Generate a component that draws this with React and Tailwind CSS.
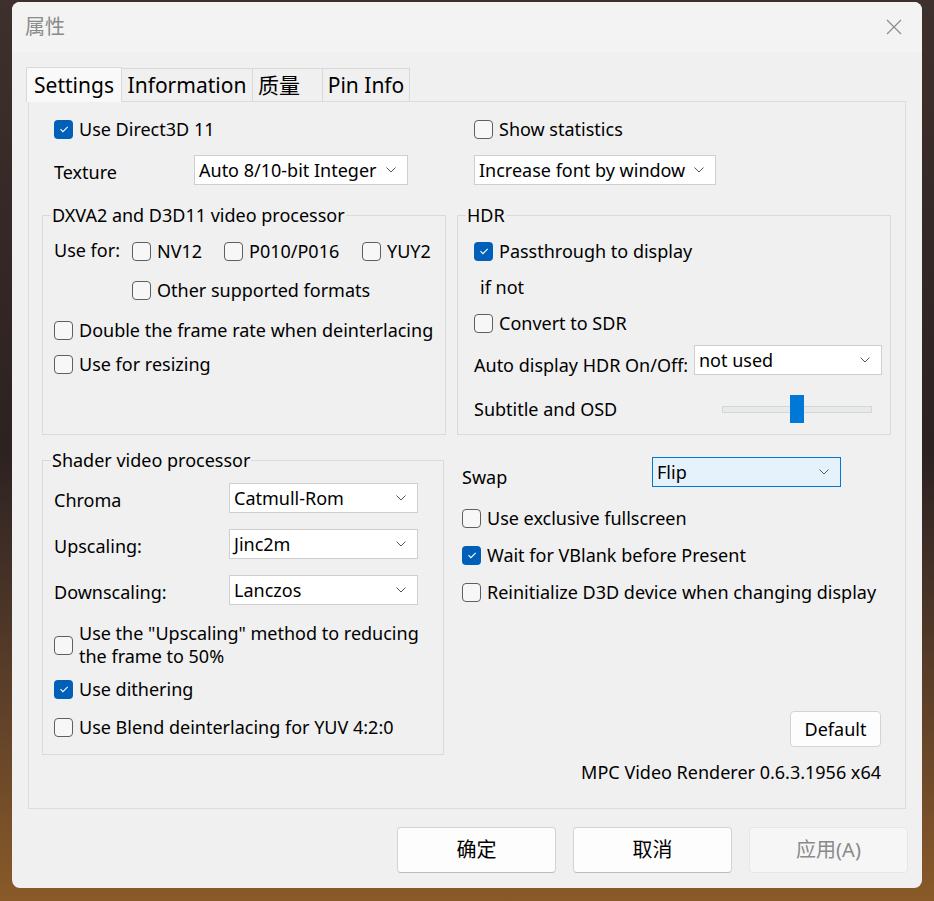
import React from 'react';

const font = "font-['Noto_Sans','Noto_Sans_CJK_SC',sans-serif]";

const Box = ({ checked }) =>
    checked ? (
        <span className="w-[19px] h-[19px] shrink-0 rounded-[4px] bg-[#005fb8] flex items-center justify-center">
            <svg width="12" height="12" viewBox="0 0 12 12">
                <path d="M2.5 6.2l2.4 2.4 4.8-4.8" fill="none" stroke="#fff" strokeWidth="1.1" />
            </svg>
        </span>
    ) : (
        <span className="w-[19px] h-[19px] shrink-0 rounded-[4px] border border-[#5f5f5f] bg-[#f7f7f7]" />
    );

const Check = ({ checked, children, className = "" }) => (
    <div className={"flex items-center gap-[6px] h-[20px] " + className}>
        <Box checked={checked} />
        <span className="whitespace-nowrap">{children}</span>
    </div>
);

const Chevron = () => (
    <svg width="12" height="8" viewBox="0 0 12 8">
        <path d="M1.5 1.5l4.5 4.5 4.5-4.5" fill="none" stroke="#555" strokeWidth="1" />
    </svg>
);

const Dropdown = ({ value, className = "", focused }) => (
    <div
        className={
            "h-[30px] shrink-0 flex items-center justify-between pl-[4px] pr-[10px] border " +
            (focused ? "border-[#0078d4] bg-[#e5f1fb] " : "border-[#cfcfcf] bg-white ") +
            className
        }
    >
        <span className="whitespace-nowrap">{value}</span>
        <Chevron />
    </div>
);

const Group = ({ title, className = "", inner = "", children }) => (
    <fieldset className={"border border-[#dadada] " + className}>
        <legend className="ml-[8px] px-[1px] leading-[21px]">{title}</legend>
        <div className={inner}>{children}</div>
    </fieldset>
);

const Tab = ({ label, active, className = "" }) => (
    <div
        className={
            "flex items-center border border-[#d9d9d9] text-[21px] " +
            (active ? "h-[35px] bg-[#f9f9f9] border-b-0 relative z-10 -mb-px " : "h-[33px] bg-[#f0f0f0] border-l-0 border-b-0 ") +
            className
        }
    >
        {label}
    </div>
);

const Button = ({ label, disabled }) => (
    <div
        className={
            "w-[159px] h-[46px] rounded-[4px] flex items-center justify-center text-[20px] border " +
            (disabled
                ? "bg-[#f6f6f6] border-[#e6e6e6] text-[#8a8a8a]"
                : "bg-[#fdfdfd] border-[#d3d3d3] border-b-[#bcbcbc] text-black")
        }
    >
        {label}
    </div>
);

export default function App() {
    return (
        <div className={"w-[934px] h-[901px] pl-[12px] pt-[2px] bg-linear-to-b from-[#3e302c] via-[#2c2222] to-[#8a5a28] text-[18px] leading-[20px] text-black " + font}>
            <div className="w-[910px] h-[886px] rounded-[8px] bg-[#f0f0f0] overflow-hidden flex flex-col">
                {/* title bar */}
                <div className="h-[50px] bg-[#f3f3f3] flex items-center justify-between pl-[13px] pr-[20px]">
                    <span className="text-[20px] text-[#8a8a8a]">属性</span>
                    <svg width="16" height="16" viewBox="0 0 16 16">
                        <path d="M1 1l14 14M15 1L1 15" stroke="#8b8b8b" strokeWidth="1.2" />
                    </svg>
                </div>

                {/* tabs */}
                <div className="flex items-end pl-[14px] pt-[15px]">
                    <Tab label="Settings" active className="w-[96px] justify-center" />
                    <Tab label="Information" className="w-[131px] justify-center" />
                    <Tab label="质量" className="w-[70px] pl-[5px]" />
                    <Tab label="Pin Info" className="w-[87px] justify-center" />
                </div>

                {/* tab panel */}
                <div className="mx-[16px] h-[708px] border border-[#dcdcdc] bg-[#f0f0f0] pl-[13px] pt-[17px]">
                    <div className="grid grid-cols-[404px_434px] gap-x-[11px]">
                        <Check checked className="ml-[12px]">Use Direct3D 11</Check>
                        <Check className="ml-[17px]">Show statistics</Check>
                    </div>

                    <div className="grid grid-cols-[404px_434px] gap-x-[11px] mt-[16px]">
                        <div className="flex items-start pl-[12px]">
                            <span className="w-[140px] mt-[7px]">Texture</span>
                            <Dropdown value="Auto 8/10-bit Integer" className="w-[214px]" />
                        </div>
                        <div className="pl-[17px]">
                            <Dropdown value="Increase font by window" className="w-[242px]" />
                        </div>
                    </div>

                    <div className="flex gap-x-[11px] mt-[20px]">
                        <Group title="DXVA2 and D3D11 video processor" className="w-[404px] h-[230px]" inner="pl-[11px]">
                            <div className="flex items-center mt-[15px] h-[20px]">
                                <span className="w-[78px] -mt-[3px]">Use for:</span>
                                <Check className="w-[92px]">NV12</Check>
                                <Check className="w-[138px]">P010/P016</Check>
                                <Check>YUY2</Check>
                            </div>
                            <Check className="ml-[78px] mt-[19px]">Other supported formats</Check>
                            <Check className="mt-[20px]">Double the frame rate when deinterlacing</Check>
                            <Check className="mt-[14px]">Use for resizing</Check>
                        </Group>

                        <Group title="HDR" className="w-[434px] h-[230px]" inner="pl-[16px]">
                            <Check checked className="mt-[15px]">Passthrough to display</Check>
                            <div className="mt-[16px] h-[20px] pl-[6px]">if not</div>
                            <Check className="mt-[16px]">Convert to SDR</Check>
                            <div className="flex items-start mt-[12px]">
                                <span className="w-[220px] mt-[10px] whitespace-nowrap">Auto display HDR On/Off:</span>
                                <Dropdown value="not used" className="w-[188px]" />
                            </div>
                            <div className="flex items-center mt-[20px] h-[28px]">
                                <span className="w-[248px]">Subtitle and OSD</span>
                                <div className="relative w-[150px] h-[28px]">
                                    <div className="absolute left-0 right-0 top-[11px] h-[7px] bg-[#e7eaea] border border-[#d6d6d6]" />
                                    <div className="absolute left-[68px] top-0 w-[14px] h-[28px] bg-[#0078d7]" />
                                </div>
                            </div>
                        </Group>
                    </div>

                    <div className="flex gap-x-[18px] mt-[15px]">
                        <Group title="Shader video processor" className="w-[402px] h-[305px]" inner="pl-[11px]">
                            <div className="flex items-start mt-[12px]">
                                <span className="w-[175px] mt-[7px]">Chroma</span>
                                <Dropdown value="Catmull-Rom" className="w-[189px]" />
                            </div>
                            <div className="flex items-start mt-[16px]">
                                <span className="w-[175px] mt-[7px]">Upscaling:</span>
                                <Dropdown value="Jinc2m" className="w-[189px]" />
                            </div>
                            <div className="flex items-start mt-[16px]">
                                <span className="w-[175px] mt-[7px]">Downscaling:</span>
                                <Dropdown value="Lanczos" className="w-[189px]" />
                            </div>
                            <div className="flex items-center gap-[6px] mt-[17px]">
                                <Box />
                                <span className="w-[345px] leading-[23px]">
                                    Use the "Upscaling" method to reducing the frame to 50%
                                </span>
                            </div>
                            <Check checked className="mt-[11px]">Use dithering</Check>
                            <Check className="mt-[18px]">Use Blend deinterlacing for YUV 4:2:0</Check>
                        </Group>

                        <div className="w-[419px] flex flex-col">
                            <div className="flex items-start mt-[7px] h-[30px]">
                                <span className="w-[190px] mt-[10px]">Swap</span>
                                <Dropdown value="Flip" focused className="w-[189px]" />
                            </div>
                            <Check className="mt-[21px]">Use exclusive fullscreen</Check>
                            <Check checked className="mt-[17px]">Wait for VBlank before Present</Check>
                            <Check className="mt-[17px]">Reinitialize D3D device when changing display</Check>
                            <div className="self-end mt-[109px] w-[91px] h-[36px] rounded-[4px] border border-[#d3d3d3] bg-[#fdfdfd] flex items-center justify-center">
                                Default
                            </div>
                            <div className="self-end mt-[15px] whitespace-nowrap">
                                MPC Video Renderer 0.6.3.1956 x64
                            </div>
                        </div>
                    </div>
                </div>

                {/* bottom buttons */}
                <div className="flex justify-end gap-x-[17px] pr-[14px] mt-[18px]">
                    <Button label="确定" />
                    <Button label="取消" />
                    <Button label="应用(A)" disabled />
                </div>
            </div>
        </div>
    );
}
